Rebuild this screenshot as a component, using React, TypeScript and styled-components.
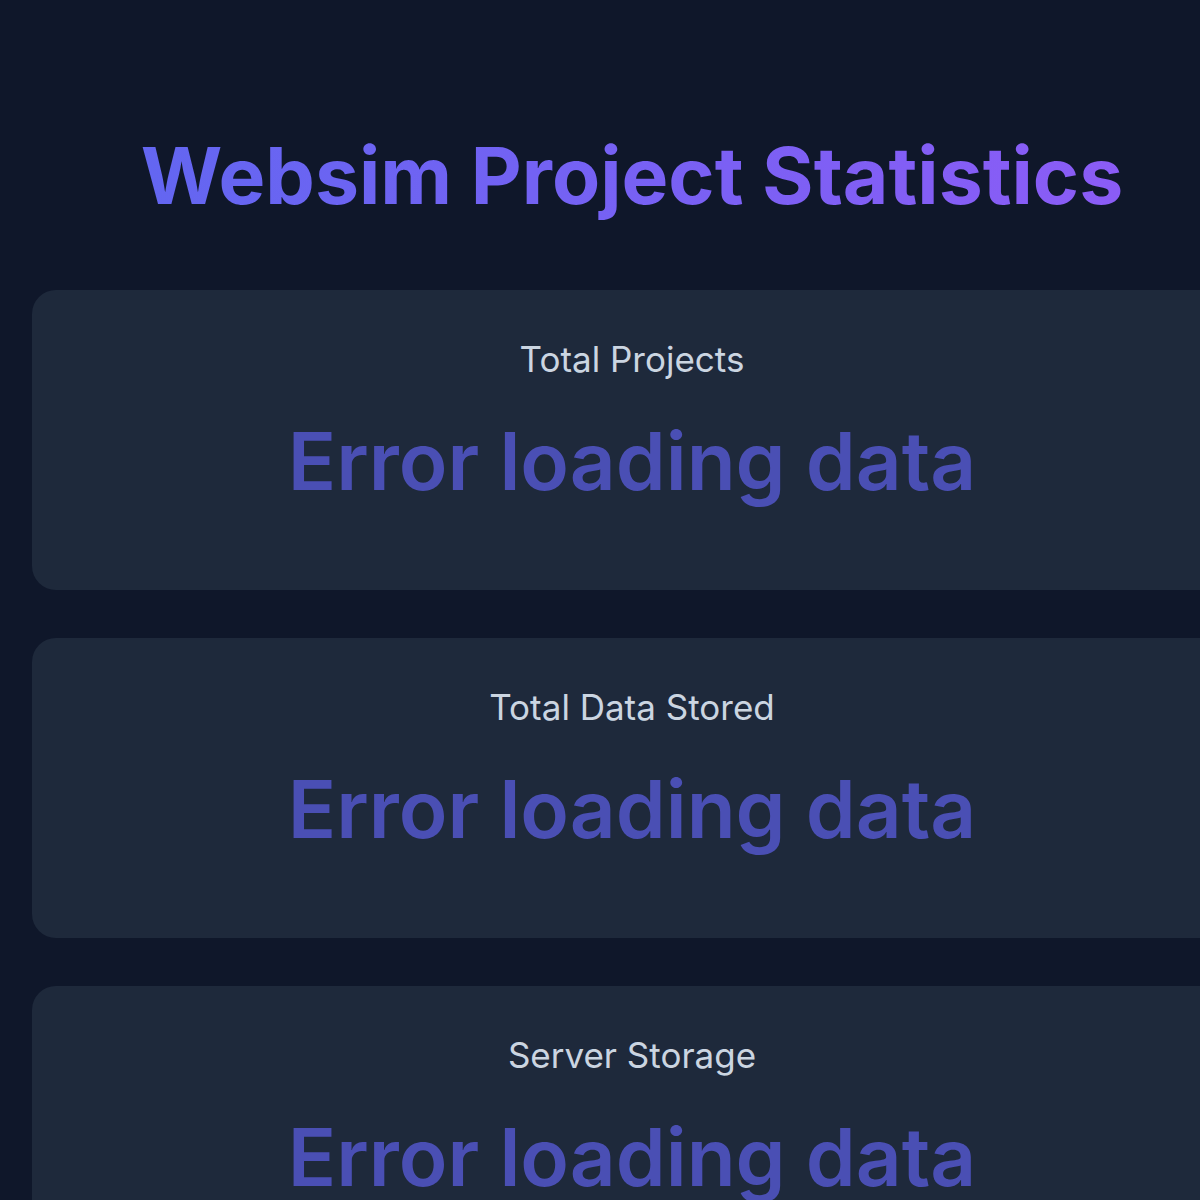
import React from "react";
import styled, { createGlobalStyle } from "styled-components";

const Global = createGlobalStyle`
  html, body {
    margin: 0;
    padding: 0;
    background: #0f172a;
  }
  body {
    font-family: Inter, "Noto Sans", sans-serif;
    color: #e2e8f0;
    overflow: hidden;
  }
`;

const Page = styled.div`
  box-sizing: border-box;
  width: 1264px;
  padding: 0 32px 32px;
  display: flex;
  flex-direction: column;
  align-items: stretch;
`;

const Title = styled.h1`
  margin: 127px 0 66px;
  font-size: 78.7px;
  font-weight: 700;
  line-height: 97px;
  text-align: center;
  letter-spacing: 0;
  background: linear-gradient(90deg, #6366f1 0%, #8b5cf6 100%);
  -webkit-background-clip: text;
  background-clip: text;
  color: transparent;
  width: fit-content;
  align-self: center;
`;

const Cards = styled.div`
  display: flex;
  flex-direction: column;
  gap: 48px;
`;

const Card = styled.section`
  box-sizing: border-box;
  background: #1e293b;
  border-radius: 24px;
  height: 300px;
  padding: 47px 32px 0;
  display: flex;
  flex-direction: column;
  align-items: center;
  gap: 31px;
`;

const Label = styled.div`
  font-size: 35px;
  line-height: 44px;
  color: #cbd5e1;
  font-weight: 400;
`;

const Value = styled.div`
  font-size: 80px;
  line-height: 97px;
  font-weight: 600;
  color: #4a4fb4;
`;

const stats = ["Total Projects", "Total Data Stored", "Server Storage"];

export default function App() {
  return (
    <>
      <Global />
      <Page>
        <Title>Websim Project Statistics</Title>
        <Cards>
          {stats.map((s) => (
            <Card key={s}>
              <Label>{s}</Label>
              <Value>Error loading data</Value>
            </Card>
          ))}
        </Cards>
      </Page>
    </>
  );
}
